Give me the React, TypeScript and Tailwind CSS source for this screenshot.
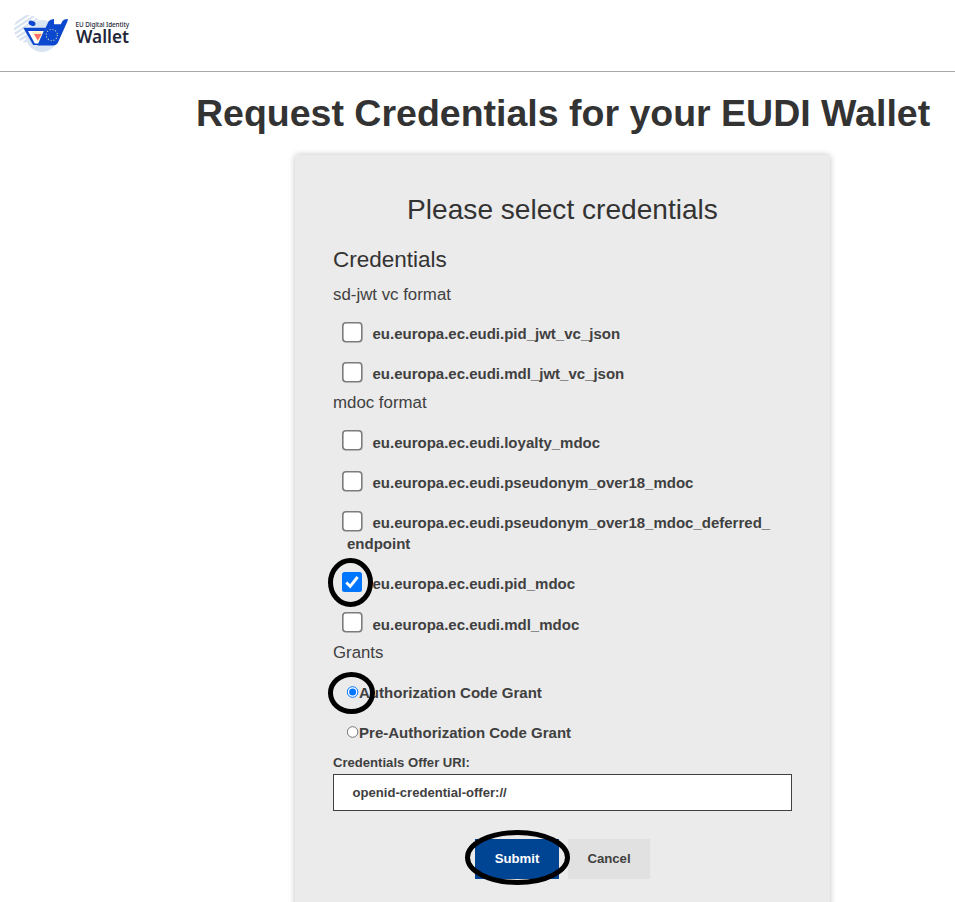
import React from "react";

function CheckBox({ checked = false }: { checked?: boolean }) {
  return checked ? (
    <svg className="block size-5 shrink-0" viewBox="0 0 20 20">
      <rect width="20" height="20" rx="2.5" fill="#0075ff" />
      <path d="M4.3 10.5 8.2 14.3 15.6 5" fill="none" stroke="#fff" strokeWidth="2.9" />
    </svg>
  ) : (
    <svg className="block size-[21px] shrink-0" viewBox="0 0 21 21">
      <rect x="0.8" y="0.8" width="19" height="19" rx="3.2" fill="#fff" stroke="#7c7c7c" strokeWidth="1.6" />
    </svg>
  );
}

function Credential({ name, rest, checked, up = "mt-2" }: { name: string; rest?: string; checked?: boolean; up?: string }) {
  return (
    <div className={rest ? "h-[61px] pl-[9px]" : "h-10 pl-[9px]"}>
      <label className="flex items-start">
        <span className={`w-[21px] ${up}`}>
          <CheckBox checked={checked} />
        </span>
        <span className="ml-[9.5px] text-[15px] leading-10 font-bold whitespace-nowrap">{name}</span>
      </label>
      {rest && <p className="-mt-[9px] pl-[5px] text-[15px] leading-5 font-bold">{rest}</p>}
    </div>
  );
}

function Grant({ name, checked }: { name: string; checked?: boolean }) {
  return (
    <label className="flex h-10 items-center pl-[14px]">
      <svg className="-mt-[1px] block size-3 shrink-0" viewBox="0 0 12 12">
        <circle cx="5.6" cy="6" r="5.3" fill="#fff" stroke={checked ? "#0075ff" : "#767676"} strokeWidth="1" />
        {checked && <circle cx="5.6" cy="6" r="3.5" fill="#0075ff" />}
      </svg>
      <span className="mt-[2px] text-[15.04px] font-bold whitespace-nowrap">{name}</span>
    </label>
  );
}

function Logo() {
  return (
    <svg className="block h-[71px] w-[150px]" viewBox="0 0 150 71">
      <defs>
        <clipPath id="disc">
          <circle cx="28" cy="29" r="14" />
        </clipPath>
      </defs>
      <g clipPath="url(#disc)" stroke="#d8e3f2" strokeWidth="2.3">
        <path d="M10 22 28 10M10 27 34 11M10 32 40 12M10 37 42 15.5M10 42 42 20.5M14 44 42 25.5M20 45 42 30" />
      </g>
      <circle cx="42" cy="36" r="16" fill="#d9e4f2" />
      <ellipse cx="32" cy="23.3" rx="3.6" ry="2.4" fill="#0b47cf" transform="rotate(22 32 23.3)" />
      <path d="M23.3 27.8H46L38 45H33.2Z" fill="#0b47cf" />
      <path d="M28 31H43.6L38.3 43.5H34.8Z" fill="#fff" />
      <path d="M31.5 31.4H43.4L38.2 42.2Z" fill="#fff0c2" />
      <path d="M34 34H41.5L37.8 40.5Z" fill="#fa6c6d" />
      <path d="M48.5 21.5Q50 19.2 54 19V24.2H60.8L62.5 21Q63.8 19 67.8 19Q68.2 20.3 66.9 22.5L58 42.5Q56.3 45.5 53 45.5H37.5Z" fill="#0b47cf" />
      <circle cx="51.8" cy="35" r="5.6" fill="none" stroke="#c2d5b0" strokeWidth="1.1" strokeDasharray="1.1 1.83" />
      <text x="75.6" y="26.6" fontFamily="'Noto Sans', sans-serif" fontSize="6.3" fontWeight="500" fill="#242638" textLength="53.5">EU Digital Identity</text>
      <text x="76" y="43" fontFamily="'Noto Sans', sans-serif" fontSize="17" fontWeight="600" fill="#242638" textLength="53" lengthAdjust="spacingAndGlyphs">Wallet</text>
    </svg>
  );
}

export default function App() {
  return (
    <div className="relative h-[902px] w-[955px] overflow-hidden bg-white font-['Liberation_Sans',Arial,sans-serif] text-[#404040]">
      <header className="h-[72px] border-b border-[#aaa]">
        <Logo />
      </header>
      <h1 className="mt-[18px] ml-[196px] h-[46px] text-[37.5px] leading-[46px] font-bold whitespace-nowrap text-[#333]">
        Request Credentials for your EUDI Wallet
      </h1>
      <main className="mt-[19px] ml-[295px] h-[780px] w-[535px] rounded-[3px] bg-[#ebebeb] px-[38px] pt-[37px] shadow-[0_0_6px_rgba(0,0,0,0.25)]">
        <h2 className="h-9 text-center text-[28.1px] leading-9 text-[#333]">Please select credentials</h2>
        <h3 className="mt-[18px] h-7 text-[22.5px] leading-7 text-[#333]">Credentials</h3>
        <h4 className="mt-[12px] h-[16px] text-[16.85px] leading-[18px]">sd-jwt vc format</h4>
        <div className="mt-[12px]">
          <Credential name="eu.europa.ec.eudi.pid_jwt_vc_json" />
          <Credential name="eu.europa.ec.eudi.mdl_jwt_vc_json" />
        </div>
        <h4 className="h-[17px] text-[16.85px] leading-[17px]">mdoc format</h4>
        <div className="mt-[12px]">
          <Credential name="eu.europa.ec.eudi.loyalty_mdoc" up="mt-[7px]" />
          <Credential name="eu.europa.ec.eudi.pseudonym_over18_mdoc" />
          <Credential name="eu.europa.ec.eudi.pseudonym_over18_mdoc_deferred_" rest="endpoint" />
          <Credential name="eu.europa.ec.eudi.pid_mdoc" checked />
          <div className="pt-px">
            <Credential name="eu.europa.ec.eudi.mdl_mdoc" up="mt-[7px]" />
          </div>
        </div>
        <h4 className="h-[16px] text-[16.8px] leading-[16px]">Grants</h4>
        <div className="mt-[11px]">
          <Grant name="Authorization Code Grant" checked />
          <Grant name="Pre-Authorization Code Grant" />
        </div>
        <label className="block h-[22px] text-[13.1px] leading-[21px] font-bold">Credentials Offer URI:</label>
        <div className="flex h-[37px] items-center border border-[#404040] bg-white pl-[18.5px] text-[13.1px] font-bold">
          openid-credential-offer://
        </div>
        <div className="mt-7 flex gap-[9px] pl-[142px]">
          <button className="h-10 w-[84px] bg-[#004494] text-[13.2px] font-bold text-white">Submit</button>
          <button className="h-10 w-[82px] bg-[#e1e1e1] text-[13.2px] font-bold">Cancel</button>
        </div>
      </main>
      <svg className="pointer-events-none absolute inset-0 h-full w-full" viewBox="0 0 955 902" fill="none" stroke="#000" strokeWidth="5">
        <ellipse cx="350.5" cy="582.5" rx="20" ry="22" />
        <ellipse cx="351.5" cy="693" rx="21" ry="18.5" />
        <ellipse cx="517.5" cy="857.5" rx="50" ry="25" />
      </svg>
    </div>
  );
}
